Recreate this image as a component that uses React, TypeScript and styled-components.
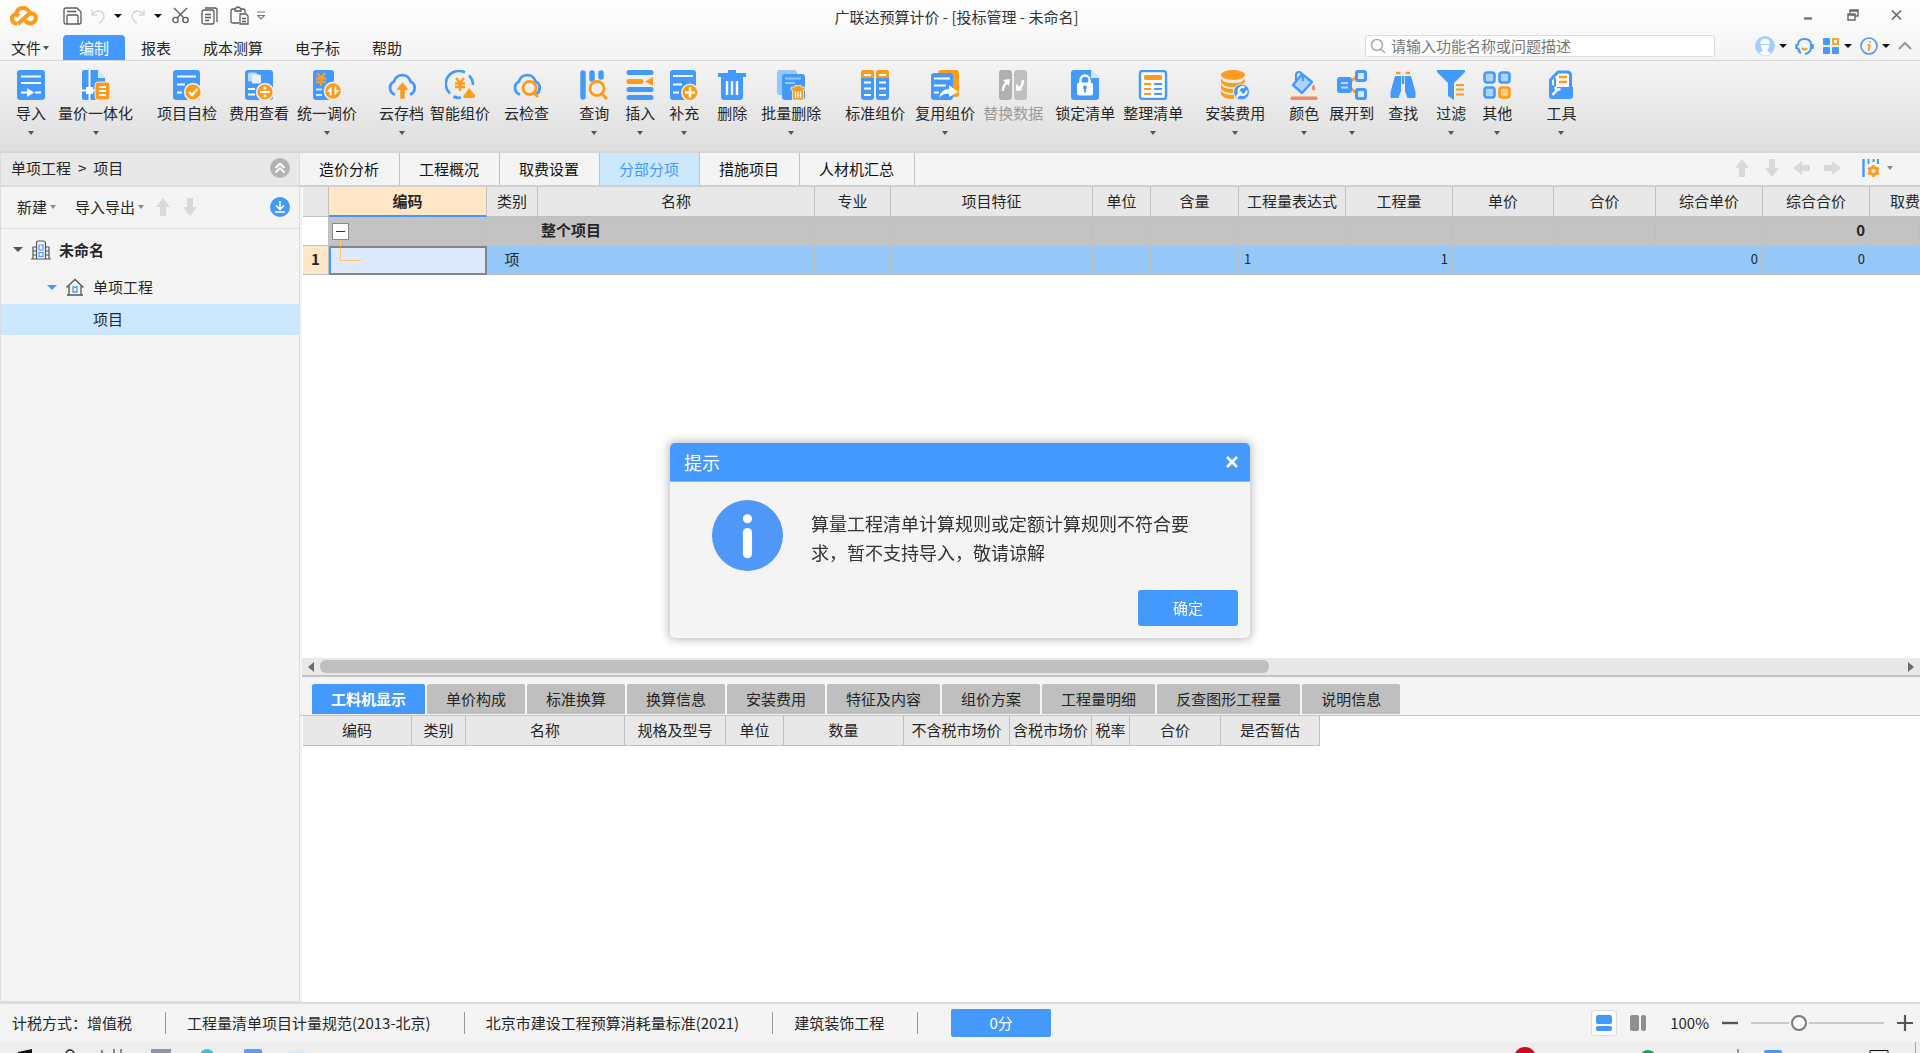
import React from 'react';
import styled, { createGlobalStyle, css } from 'styled-components';

const BLUE = '#4499ff';
const ORANGE = '#ff9b1a';
const LINE = '#d6d6d6';
const PANEL = '#f4f4f4';

const Global = createGlobalStyle`
  *, *::before, *::after { box-sizing: border-box; }
  body { margin: 0; overflow: hidden; }
  body, button, input, table {
    font-family: "Noto Sans CJK SC", "Noto Sans", sans-serif;
    font-size: 15px;
    line-height: 20px;
    color: #262626;
  }
  button { padding: 0; border: 0; background: none; white-space: nowrap; }
  svg { display: block; flex: none; }
`;

const Shell = styled.div`
  height: 100vh;
  display: flex;
  flex-direction: column;
  background: ${PANEL};
  overflow: hidden;
`;

const Top = styled.header`
  flex: none;
  background: linear-gradient(#ffffff, #f3f3f3);
  border-bottom: 1px solid ${LINE};
`;

const TitleBar = styled.div`
  display: grid;
  grid-template-columns: 1fr auto 1fr;
  align-items: center;
  height: 33px;
  padding: 0 16px 0 9px;
`;

const QuickTools = styled.div`
  display: flex;
  align-items: center;
  gap: 8px;
  padding-bottom: 2px;
`;

const ClipboardTools = styled.div`
  display: flex;
  align-items: center;
  gap: 12px;
  margin-left: 2px;
`;

const Brand = styled.div`
  margin-right: 16px;
`;

const AppTitle = styled.div`
  color: #333;
`;

const WindowButtons = styled.div`
  display: flex;
  justify-content: flex-end;
  gap: 30px;
  padding-bottom: 4px;
`;

const IconButton = styled.button`
  display: flex;
  align-items: center;
  justify-content: center;
  gap: 4px;
`;

const Caret = styled.span<{ $color?: string; $size?: number }>`
  flex: none;
  width: 0;
  height: 0;
  border-style: solid;
  border-width: ${(p) => (p.$size ?? 3) + ((p.$size ?? 3) < 4 ? 1 : 0)}px ${(p) => p.$size ?? 3}px 0;
  border-color: ${(p) => p.$color ?? '#555'} transparent transparent;
`;

const MenuBar = styled.nav`
  display: flex;
  align-items: flex-end;
  height: 27px;
`;

const MenuItem = styled.button<{ $active?: boolean; $first?: boolean }>`
  display: flex;
  align-items: center;
  gap: 2px;
  height: 25px;
  padding: ${(p) => (p.$first ? '0 14px 0 11px' : '0 16px')};
  border-radius: 4px 4px 0 0;
  ${(p) =>
    p.$active &&
    css`
      background: ${BLUE};
      color: #fff;
    `}
`;

const SearchBox = styled.label`
  display: flex;
  align-items: center;
  gap: 5px;
  width: 350px;
  height: 22px;
  margin: 0 40px 3px auto;
  padding-left: 4px;
  background: #fff;
  border: 1px solid #dedede;
  border-radius: 3px;
  input {
    flex: 1;
    min-width: 0;
    height: 20px;
    padding: 0;
    border: 0;
    outline: 0;
    background: none;
  }
  input::placeholder { color: #777; opacity: 1; }
`;

const UserTools = styled.div`
  display: flex;
  align-items: center;
  gap: 8px;
  height: 28px;
  padding-right: 8px;
`;

const Ribbon = styled.div`
  flex: none;
  display: flex;
  align-items: flex-start;
  height: 92px;
  padding: 9px 0 0 4px;
  background: linear-gradient(#f4f4f4, #dedede);
  border-bottom: 2px solid ${LINE};
`;

const Tool = styled.button<{ $space: number; $disabled?: boolean }>`
  display: flex;
  flex-direction: column;
  align-items: center;
  margin-left: ${(p) => p.$space}px;
  color: ${(p) => (p.$disabled ? '#9a9a9a' : '#262626')};
  span:nth-of-type(1) { margin: 3px 0 8px; }
`;

const Workspace = styled.div`
  flex: 1;
  min-height: 0;
  display: flex;
  border-bottom: 2px solid #dcdcdc;
`;

const Sidebar = styled.aside`
  flex: none;
  width: 300px;
  background: ${PANEL};
  border: solid #dcdcdc;
  border-width: 0 1px 1px;
`;

const SideHeader = styled.div`
  display: flex;
  align-items: center;
  justify-content: space-between;
  height: 34px;
  padding: 0 9px 2px 10px;
  background: #e8e8e8;
  border-bottom: 2px solid #dcdcdc;
`;

const Crumbs = styled.div`
  display: flex;
  gap: 7px;
`;

const SideTools = styled.div`
  display: flex;
  align-items: center;
  height: 42px;
  padding: 0 9px 2px 16px;
  border-bottom: 1px solid #dcdcdc;
  > button { margin-right: 11px; gap: 3px; }
  > button:first-child { margin-right: 19px; }
  > button:last-child { margin: 0 0 0 auto; }
`;

const Tree = styled.ul`
  list-style: none;
  margin: 0;
  padding: 0;
`;

const TreeRow = styled.li<{ $level: number; $selected?: boolean; $root?: boolean }>`
  display: flex;
  align-items: center;
  gap: ${(p) => (p.$root ? 8 : 9)}px;
  height: ${(p) => (p.$root ? 43 : p.$selected ? 31 : 32)}px;
  padding: 0 0 2px ${(p) => [12, 46, 92][p.$level]}px;
  font-weight: ${(p) => (p.$root ? 700 : 400)};
  background: ${(p) => (p.$selected ? '#cce8ff' : 'transparent')};
`;

const Main = styled.main`
  flex: 1;
  min-width: 0;
  display: flex;
  flex-direction: column;
`;

const Upper = styled.section`
  flex: 524 1 0;
  min-height: 0;
  display: flex;
  flex-direction: column;
`;

const Lower = styled.section`
  flex: 325 1 0;
  min-height: 0;
  display: flex;
  flex-direction: column;
`;

const PageTabs = styled.div`
  flex: none;
  display: flex;
  height: 34px;
  border-bottom: 2px solid #d0d0d0;
`;

const PageTab = styled.button<{ $active?: boolean }>`
  padding: 0 20px 0 19px;
  border-right: 1px solid #c2c2c2;
  color: ${(p) => (p.$active ? BLUE : '#111')};
  background: ${(p) => (p.$active ? '#cce8ff' : 'transparent')};
`;

const TabTools = styled.div`
  display: flex;
  align-items: center;
  gap: 14px;
  margin-left: auto;
  padding: 0 27px 2px 0;
  > button:last-child { margin-left: 8px; gap: 7px; }
`;

const Canvas = styled.div`
  flex: 1;
  min-height: 0;
  margin-left: 2px;
  padding-left: 1px;
  background: #fff;
  overflow: hidden;
`;

const Grid = styled.table<{ $width?: number }>`
  width: ${(p) => (p.$width ? `${p.$width}px` : '100%')};
  table-layout: fixed;
  border-collapse: separate;
  border-spacing: 0;
  th, td {
    height: 29px;
    padding: 0 5px 2px;
    border: solid #bfbfbf;
    border-width: 0 1px 1px 0;
    text-align: left;
    white-space: nowrap;
    font-weight: 400;
  }
  thead th {
    height: 30px;
    padding: 0 0 2px;
    text-align: center;
    background: #e8e8e8;
  }
`;

const ActiveHead = styled.th`
  && {
    font-weight: 700;
    padding-bottom: 1px;
    background: #ffe6c7;
    border-bottom: 2px solid ${BLUE};
  }
`;

const EdgeHead = styled.th`
  && {
    text-align: right;
    border-right: 0;
  }
`;

const TotalRow = styled.tr`
  && > * { background: #c3c3c3; font-weight: 700; }
  && > th:first-child { background: #fff; }
  && > td:nth-child(4) { padding-left: 3px; }
`;

const ItemRow = styled.tr`
  && > td { background: #93c8f8; font-size: 13px; }
  && > th { background: #ffe6c7; font-weight: 700; text-align: center; padding: 0 0 2px; }
  && > td:nth-child(3) { font-size: 15px; text-align: center; }
`;

const NumberCell = styled.td`
  && { text-align: right; padding-right: 4px; }
`;

const TreeCell = styled.td`
  && { padding: 0 0 0 3px; }
`;

const CurrentCell = styled.td`
  &&&& {
    padding: 0 0 0 9px;
    background: #dde9fd;
    border: 2px solid #858585;
    border-left-color: ${BLUE};
  }
  svg { margin-top: -12px; }
`;

const Toggle = styled.button`
  position: relative;
  display: block;
  width: 17px;
  height: 17px;
  background: #fff;
  border: 1px solid #8a8a8a;
  &::before {
    content: '';
    display: block;
    width: 9px;
    height: 1px;
    margin: 0 auto;
    background: #333;
  }
  &::after {
    content: '';
    position: absolute;
    left: 7px;
    top: 16px;
    width: 1px;
    height: 7px;
    background: #ffc56f;
  }
`;

const ScrollRow = styled.div`
  flex: none;
  display: flex;
  align-items: center;
  gap: 6px;
  height: 19px;
  margin-left: 2px;
  padding: 0 6px;
  background: #e8e8e8;
  border-bottom: 2px solid #c3c3c3;
`;

const ScrollTrack = styled.div`
  flex: 1;
`;

const ScrollThumb = styled.div`
  width: 60%;
  height: 13px;
  border-radius: 6px;
  background: #bfbfbf;
`;

const DetailTabs = styled.div`
  flex: none;
  display: flex;
  align-items: stretch;
  gap: 2px;
  height: 39px;
  padding: 7px 0 1px 12px;
  border-bottom: 1px solid #c3c3c3;
`;

const DetailTab = styled.button<{ $active?: boolean }>`
  padding: 0 19px;
  border-radius: 2px 2px 0 0;
  color: ${(p) => (p.$active ? '#fff' : '#262626')};
  font-weight: ${(p) => (p.$active ? 700 : 400)};
  background: ${(p) => (p.$active ? BLUE : '#bfbfbf')};
`;

const Status = styled.footer`
  flex: none;
  display: flex;
  align-items: center;
  height: 38px;
  padding: 0 7px 0 12px;
  background: ${PANEL};
`;

const StatusItem = styled.span`
  display: flex;
  align-items: center;
  white-space: nowrap;
  &::after {
    content: '';
    width: 1px;
    height: 22px;
    margin: 0 21px 0 33px;
    background: #8f9aa3;
  }
`;

const Score = styled.button`
  width: 100px;
  height: 28px;
  margin-left: 12px;
  border-radius: 2px;
  background: ${BLUE};
  color: #fff;
`;

const ZoomTools = styled.div`
  display: flex;
  align-items: center;
  gap: 13px;
  margin-left: auto;
`;

const ViewSwitch = styled.div`
  display: flex;
  gap: 8px;
`;

const ViewButton = styled(IconButton)<{ $active?: boolean }>`
  width: 26px;
  height: 26px;
  border-radius: 3px;
  border: 1px solid ${(p) => (p.$active ? '#dcdcdc' : 'transparent')};
  background: ${(p) => (p.$active ? '#fff' : 'transparent')};
`;

const ZoomValue = styled.label`
  margin-left: 6px;
`;

const Slider = styled.input`
  appearance: none;
  width: 133px;
  height: 16px;
  margin: 0;
  background: linear-gradient(#c9c9c9, #c9c9c9) center / 100% 2px no-repeat;
  &::-webkit-slider-thumb {
    appearance: none;
    width: 16px;
    height: 16px;
    border-radius: 50%;
    border: 2px solid #777;
    background: #fff;
    box-shadow: 0 0 0 2px ${PANEL};
  }
`;

const Taskbar = styled.div`
  flex: none;
  display: flex;
  align-items: flex-end;
  justify-content: space-between;
  height: 11px;
  background: #eeeeee;
  overflow: hidden;
`;

const Overlay = styled.div`
  position: fixed;
  inset: 0;
  display: flex;
  align-items: center;
  justify-content: center;
  padding-top: 28px;
`;

const Dialog = styled.section`
  width: 580px;
  border-radius: 5px;
  background: ${PANEL};
  box-shadow: 0 0 8px 2px rgba(0, 0, 0, 0.25);
  overflow: hidden;
`;

const DialogHead = styled.header`
  display: flex;
  align-items: center;
  justify-content: space-between;
  height: 39px;
  padding: 0 12px 0 14px;
  background: ${BLUE};
  border-bottom: 1px solid #84bbfb;
  color: #fff;
  font-size: 18px;
`;

const DialogBody = styled.div`
  display: flex;
  gap: 28px;
  padding: 18px 42px 0;
  p {
    width: 380px;
    margin: 9px 0 0;
    font-size: 18px;
    line-height: 29px;
    color: #333;
  }
`;

const DialogFoot = styled.footer`
  display: flex;
  justify-content: flex-end;
  padding: 19px 12px 12px;
`;

const Confirm = styled.button`
  width: 100px;
  height: 36px;
  border-radius: 3px;
  background: ${BLUE};
  color: #fff;
`;

/* ---------- ribbon icons, all on a 30 x 30 board ---------- */

const Board = ({ children }: { children: React.ReactNode }) => (
  <svg width="30" height="30" viewBox="0 0 30 30" fill="none" aria-hidden="true">
    {children}
  </svg>
);

const Yen = ({ x, y }: { x: number; y: number }) => (
  <path
    transform={`translate(${x} ${y})`}
    d="M1 0L5 5L9 0M0 5.5H10M0 9H10M5 5V13"
    stroke={ORANGE}
    strokeWidth="2.4"
  />
);

const CLOUD = 'M8 24.5A7 7 0 0 1 7 11.5A8.5 8.5 0 0 1 23.5 11.5A7 7 0 0 1 23 24.5';

const icons: Record<string, React.ReactNode> = {
  import: (
    <Board>
      <rect x="1" width="28" height="30" rx="3" fill={BLUE} />
      <path d="M5 6.5H25M5 13H25M5 22.5H12M19 22.5H25" stroke="#fff" strokeWidth="2.2" />
      <path d="M11 18L18 22.5L11 27Z" fill="#fff" />
    </Board>
  ),
  unify: (
    <Board>
      <path d="M3 0H17L24 8V30H3Q1 30 1 28V2Q1 0 3 0Z" fill={BLUE} />
      <path d="M17 0L24 8H17Z" fill="#d5e9ff" />
      <path d="M8.5 0V30M0 20.5H16" stroke="#fff" strokeWidth="2" />
      <rect x="5" y="17" width="7" height="7" fill="#fff" />
      <rect x="14" y="12" width="15" height="18" rx="3" fill={ORANGE} stroke="#f0f0f0" />
      <path d="M18 17H25M18 21H25M18 25H25" stroke="#fff" strokeWidth="1.8" />
    </Board>
  ),
  selfcheck: (
    <Board>
      <rect x="1" width="27" height="30" rx="3" fill={BLUE} />
      <path d="M5 6.5H24M5 14.5H13M5 22.5H10" stroke="#fff" strokeWidth="2" />
      <circle cx="21" cy="22" r="8.4" fill={ORANGE} stroke="#efefef" strokeWidth="1.6" />
      <path d="M17 22L20 25L25.500 19" stroke="#fff" strokeWidth="2.4" />
    </Board>
  ),
  feeview: (
    <Board>
      <rect x="1" width="28" height="30" rx="3" fill={BLUE} />
      <rect x="4" y="2.500" width="9" height="9" rx="1.500" fill="#bfdcff" />
      <rect x="8" y="4.500" width="9" height="9" rx="1.500" fill="#e4f1ff" />
      <path d="M4 19H11M4 24.500H11" stroke="#fff" strokeWidth="2" />
      <circle cx="21" cy="22" r="8.4" fill={ORANGE} stroke="#efefef" strokeWidth="1.6" />
      <path d="M16 22H26" stroke="#fff" strokeWidth="2.2" />
      <circle cx="21" cy="18" r="1.5" fill="#fff" />
      <circle cx="21" cy="26" r="1.5" fill="#fff" />
    </Board>
  ),
  adjust: (
    <Board>
      <rect x="1" width="21" height="30" rx="3" fill={BLUE} />
      <Yen x={4} y={3} />
      <path d="M4 19.500H10M4 25H10" stroke="#cfe5ff" strokeWidth="2" />
      <circle cx="21" cy="21" r="8.6" fill={ORANGE} stroke="#efefef" strokeWidth="1.6" />
      <path d="M19.500 16.500V25.500H17.800V22H14.500ZM22.500 25.500V16.500H24.200V20H27.500Z" fill="#fff" />
    </Board>
  ),
  cloudsave: (
    <Board>
      <path d={CLOUD} stroke={BLUE} strokeWidth="2.800" />
      <path d="M15.500 12L22 20H18V29H13V20H9Z" fill={ORANGE} stroke="#eee" strokeWidth="0.500" />
    </Board>
  ),
  smart: (
    <Board>
      <path d="M20 2.500A13 13 0 0 0 5 23.500M24 5.500Q28 9.500 28 15M8.500 26.500Q12 28.500 16 27.500" stroke={BLUE} strokeWidth="2.600" />
      <Yen x={10} y={8} />
      <path d="M24 18Q27 22 30 25Q31 28 28 28H20Q17 28 19 25Q22 22 24 18Z" fill={ORANGE} />
    </Board>
  ),
  cloudcheck: (
    <Board>
      <path d={CLOUD} stroke={BLUE} strokeWidth="2.800" />
      <circle cx="17.500" cy="18" r="6.500" stroke={ORANGE} strokeWidth="2.800" fill="#eee" />
      <path d="M22 23L26 27" stroke={ORANGE} strokeWidth="3" />
    </Board>
  ),
  query: (
    <Board>
      <path d="M4 3V27M13 3V9M22 3V7" stroke={BLUE} strokeWidth="5.500" strokeLinecap="round" />
      <circle cx="18" cy="18.500" r="7" stroke={ORANGE} strokeWidth="2.800" fill="#eee" />
      <path d="M23 24L28 29" stroke={ORANGE} strokeWidth="3" />
    </Board>
  ),
  insert: (
    <Board>
      <path d="M4 2.500H26M4 19.500H26M4 27.500H26" stroke={BLUE} strokeWidth="5" strokeLinecap="round" />
      <path d="M4 11.500H16" stroke={ORANGE} strokeWidth="5" strokeLinecap="round" />
      <path d="M28 7V16L20 11.500Z" fill={ORANGE} />
    </Board>
  ),
  supply: (
    <Board>
      <rect x="1" width="26" height="30" rx="3" fill={BLUE} />
      <path d="M4 6H24M4 14.500H13M4 22.500H10" stroke="#fff" strokeWidth="2" />
      <circle cx="21" cy="22.500" r="8.200" fill={ORANGE} stroke="#efefef" strokeWidth="1.600" />
      <path d="M16 22.500H26M21 17.500V27.500" stroke="#fff" strokeWidth="2.400" />
    </Board>
  ),
  remove: (
    <Board>
      <path d="M1 3H11V0H19V3H29V7H26V27Q26 30 23 30H7Q4 30 4 27V7H1Z" fill={BLUE} />
      <path d="M10 11V25M15 11V25M20 11V25" stroke="#fff" strokeWidth="2.400" />
    </Board>
  ),
  batch: (
    <Board>
      <rect x="1" width="20" height="25" rx="3" fill="#94c6ff" />
      <rect x="6" y="4" width="23" height="26" rx="3" fill={BLUE} />
      <path d="M9 8.500H25M9 13H19" stroke="#94c6ff" strokeWidth="1.800" />
      <path d="M15 17H19V15.500H25V17H29V20H27.500V30H16.500V20H15Z" fill={ORANGE} stroke="#eee" strokeWidth="0.800" />
      <path d="M19.500 21V28M22 21V28M24.500 21V28" stroke="#fff" strokeWidth="1.300" />
    </Board>
  ),
  standard: (
    <Board>
      <rect x="1" width="13" height="30" rx="3" fill={BLUE} />
      <rect x="16" width="13" height="30" rx="3" fill={BLUE} />
      <path d="M1 8V3Q1 0 4 0H11Q14 0 14 3V8ZM16 8V3Q16 0 19 0H26Q29 0 29 3V8Z" fill={ORANGE} />
      <path d="M4 5H11M19 5H26M4 12.500H11M19 12.500H26M4 18.500H11M19 18.500H26M4 25H11M19 25H26" stroke="#fff" strokeWidth="2.200" />
    </Board>
  ),
  reuse: (
    <Board>
      <rect x="8" width="21" height="27" rx="3" fill={ORANGE} />
      <rect x="1" y="3" width="22" height="27" rx="3" fill={BLUE} />
      <path d="M4 8.500H20M4 15.500H16M4 22.500H9" stroke="#fff" strokeWidth="2" />
      <path d="M9 28Q11 19 19 19V15L28 22L19 27V24Q13 23 9 28Z" fill="#fff" />
    </Board>
  ),
  swap: (
    <Board>
      <rect x="1" width="13" height="30" rx="3" fill="#b0b0b0" />
      <rect x="16" width="13" height="30" rx="3" fill="#c0c0c0" />
      <path d="M5 21Q5 15 10 11M25 10Q25 16 20 20" stroke="#fff" strokeWidth="2.400" />
      <path d="M5 10L12 9L11 16ZM18 14V21L25 20Z" fill="#fff" />
    </Board>
  ),
  lock: (
    <Board>
      <path d="M4 0H21L29 8V27Q29 30 26 30H4Q1 30 1 27V3Q1 0 4 0Z" fill={BLUE} />
      <path d="M21 0L29 8H21Z" fill="#d5e9ff" />
      <rect x="7" y="12.500" width="16" height="13" rx="2.500" fill="#fff" />
      <path d="M10.500 13V10A4.500 4.500 0 0 1 19.500 10V13" stroke="#fff" strokeWidth="2.400" />
      <circle cx="15" cy="17.500" r="2" fill={BLUE} />
      <path d="M15 18V22.500" stroke={BLUE} strokeWidth="1.800" />
    </Board>
  ),
  arrange: (
    <Board>
      <rect x="2" y="1" width="26" height="28" rx="2.500" stroke={BLUE} strokeWidth="2.400" fill="#fff" />
      <rect x="6" y="5" width="18" height="5" rx="1.500" fill={ORANGE} />
      <path d="M6 14H13M6 19H13M6 24H13" stroke={ORANGE} strokeWidth="2.200" />
      <path d="M16 14H24M16 19H24M16 24H24" stroke={BLUE} strokeWidth="2.200" />
    </Board>
  ),
  install: (
    <Board>
      <ellipse cx="13" cy="5" rx="12" ry="5" fill={ORANGE} />
      <path d="M1 8Q2 13 13 13Q24 13 25 8V12Q23 17 13 17Q2 17 1 12ZM1 14Q2 19 13 19V23Q2 23 1 18ZM1 20Q2 25 14 25V29Q2 29 1 24Z" fill={ORANGE} />
      <circle cx="21.500" cy="22" r="8" fill={BLUE} stroke="#e8e8e8" />
      <path d="M16.500 27L21.500 22" stroke="#fff" strokeWidth="2.600" />
      <path d="M24.500 17.500A4 4 0 1 0 26.500 20.500" stroke="#fff" strokeWidth="2.200" />
    </Board>
  ),
  color: (
    <Board>
      <path d="M13 4L23 12L13 23L4 15Z" fill="#acd4ff" stroke={BLUE} strokeWidth="2.400" strokeLinejoin="round" />
      <path d="M7 12V5Q7 2 10.500 2Q14 3 14 11" stroke={BLUE} strokeWidth="2.200" />
      <path d="M24.500 14Q28 20 24.500 20.500Q21 20 24.500 14Z" fill="#fb8463" />
      <path d="M3 28.200H27" stroke="#fb8463" strokeWidth="3.400" strokeLinecap="round" />
    </Board>
  ),
  expand: (
    <Board>
      <path d="M12 13L20 6M12 16L20 24" stroke={ORANGE} strokeWidth="2.400" />
      <rect y="7" width="15" height="16" rx="3" fill={BLUE} />
      <path d="M4 13H11M4 17.500H11" stroke="#b9d9ff" strokeWidth="1.800" />
      <rect x="19.500" y="1.500" width="9" height="9" rx="1.500" fill="#d5e9ff" stroke={BLUE} strokeWidth="3" />
      <rect x="19.500" y="19.500" width="9" height="9" rx="1.500" fill="#d5e9ff" stroke={BLUE} strokeWidth="3" />
    </Board>
  ),
  find: (
    <Board>
      <path d="M7 6H13V21L10.500 28H2.500V22ZM23 6H17V21L19.500 28H27.500V22Z" fill={BLUE} />
      <path d="M15 6V14" stroke={BLUE} strokeWidth="2.500" />
      <path d="M8 3H12.500M17.500 3H22" stroke={ORANGE} strokeWidth="2.600" />
    </Board>
  ),
  filter: (
    <Board>
      <path d="M1 0H29V2L18 13V30L12 26V13L1 2Z" fill={BLUE} />
      <path d="M20 15H28M20 19.500H28M20 24.500H28" stroke={ORANGE} strokeWidth="2.200" />
    </Board>
  ),
  others: (
    <Board>
      {[[2.5, 2.5], [17.5, 2.5], [2.5, 17.5]].map(([x, y]) => (
        <rect key={`${x}-${y}`} x={x} y={y} width="10" height="10" rx="2.500" fill="#acd4ff" stroke={BLUE} strokeWidth="2.600" />
      ))}
      <rect x="17.500" y="17.500" width="10" height="10" rx="2.500" fill="#ffcb8a" stroke={ORANGE} strokeWidth="2.600" />
    </Board>
  ),
  toolbox: (
    <Board>
      <path d="M4.500 17V10L12 2H21Q24.500 2 24.500 5V17" stroke={BLUE} strokeWidth="3" strokeLinejoin="round" fill="#fff" />
      <path d="M9 8V17" stroke={BLUE} strokeWidth="2" />
      <path d="M13 7H21M13 12H21" stroke={ORANGE} strokeWidth="2.400" />
      <path d="M3 12L9 17H27V26Q27 29 24 29H6Q3 29 3 26Z" fill={BLUE} />
      <path d="M6.500 25L11 20M9 17L11 20L14.500 19" stroke="#fff" strokeWidth="2.600" />
    </Board>
  ),
};

const tools: [string, string, number, boolean?][] = [
  ['import', '导入', 12, true],
  ['unify', '量价一体化', 12, true],
  ['selfcheck', '项目自检', 24],
  ['feeview', '费用查看', 12],
  ['adjust', '统一调价', 8, true],
  ['cloudsave', '云存档', 22, true],
  ['smart', '智能组价', 6],
  ['cloudcheck', '云检查', 14],
  ['query', '查询', 30, true],
  ['insert', '插入', 16, true],
  ['supply', '补充', 14, true],
  ['remove', '删除', 18],
  ['batch', '批量删除', 14, true],
  ['standard', '标准组价', 24],
  ['reuse', '复用组价', 10, true],
  ['swap', '替换数据', 8],
  ['lock', '锁定清单', 12],
  ['arrange', '整理清单', 8, true],
  ['install', '安装费用', 22, true],
  ['color', '颜色', 24, true],
  ['expand', '展开到', 10, true],
  ['find', '查找', 14],
  ['filter', '过滤', 18, true],
  ['others', '其他', 16, true],
  ['toolbox', '工具', 34, true],
];

const Arrow = ({ turn }: { turn: number }) => (
  <svg width="16" height="20" viewBox="0 0 16 20" aria-hidden="true">
    <path transform={`rotate(${turn} 8 10)`} d="M8 1L15 10H11V19H5V10H1Z" fill="#d9d9d9" />
  </svg>
);

const columns: [string, number | null][] = [
  ['', 26], ['编码', 158], ['类别', 51], ['名称', 277], ['专业', 76], ['项目特征', 202],
  ['单位', 58], ['含量', 88], ['工程量表达式', 107], ['工程量', 107], ['单价', 101],
  ['合价', 102], ['综合单价', 107], ['综合合价', 107], ['取费', null],
];

const detailColumns: [string, number][] = [
  ['编码', 109], ['类别', 54], ['名称', 159], ['规格及型号', 101], ['单位', 58], ['数量', 120],
  ['不含税市场价', 106], ['含税市场价', 82], ['税率', 38], ['合价', 91], ['是否暂估', 99],
];

const detailWidth = detailColumns.reduce((total, [, w]) => total + w, 0);

const Cols = ({ list }: { list: [string, number | null][] }) => (
  <colgroup>
    {list.map(([name, w]) => (
      <col key={name} width={w ?? undefined} />
    ))}
  </colgroup>
);

const Blank = ({ count }: { count: number }) => (
  <>
    {Array.from({ length: count }, (_, i) => (
      <td key={i} />
    ))}
  </>
);

function TitleRow() {
  return (
    <TitleBar>
      <QuickTools>
        <Brand>
          <svg width="30" height="22" viewBox="0 0 30 22" fill="none" stroke={ORANGE} strokeWidth="4" aria-hidden="true">
            <path d="M8 18.500A4.800 4.800 0 0 1 5 9.800Q7.500 8.800 10 11M7 9.500Q8 3 14 3Q18.500 3 20.500 7.500M9 19L19 9.800Q24 6.500 26.500 10.800Q28 16 23 18.200Q18.500 19 16.500 15.500" strokeLinejoin="round" />
          </svg>
        </Brand>
        <IconButton aria-label="保存">
          <svg width="19" height="18" viewBox="0 0 19 18" fill="none" stroke="#5c5c5c" strokeWidth="1.300">
            <path d="M1 3Q1 1 3 1H14L18 5V15Q18 17 16 17H3Q1 17 1 15ZM4 17V9Q4 8 5 8H14Q15 8 15 9V17M4 4.500H13" />
          </svg>
        </IconButton>
        <IconButton aria-label="撤销">
          <svg width="16" height="16" viewBox="0 0 16 16" fill="none" stroke="#d8d8d8" strokeWidth="1.500">
            <path d="M2 2V7H7M2 7Q5 3 9 3Q14 4 14 9Q13 13 9 15" />
          </svg>
        </IconButton>
        <Caret $color="#111" $size={4} />
        <IconButton aria-label="恢复">
          <svg width="16" height="16" viewBox="0 0 16 16" fill="none" stroke="#d8d8d8" strokeWidth="1.500">
            <path d="M14 2V7H9M14 7Q11 3 7 3Q2 4 2 9Q3 13 7 15" />
          </svg>
        </IconButton>
        <Caret $color="#111" $size={4} />
        <ClipboardTools>
          <IconButton aria-label="剪切">
            <svg width="17" height="17" viewBox="0 0 17 17" fill="none" stroke="#5c5c5c" strokeWidth="1.400">
              <circle cx="3.500" cy="13" r="2.600" />
              <circle cx="13.500" cy="13" r="2.600" />
              <path d="M2 1L12 11M15 1L5 11" />
            </svg>
          </IconButton>
          <IconButton aria-label="复制">
            <svg width="17" height="18" viewBox="0 0 17 18" fill="none" stroke="#5c5c5c" strokeWidth="1.300">
              <rect x="1" y="3" width="12" height="14" rx="2" />
              <path d="M4 1H14Q16 1 16 3V15M4 7.500H10M4 10.500H10M4 13.500H8" />
            </svg>
          </IconButton>
          <IconButton aria-label="粘贴">
            <svg width="19" height="19" viewBox="0 0 19 19" fill="none" stroke="#5c5c5c" strokeWidth="1.300">
              <path d="M9 17H3Q1 17 1 15V5Q1 3 3 3H5M11 3H13Q15 3 15 5V7M5 5V3Q8 -1 11 3V5Z" />
              <path d="M10 8H16L18 10V18H10ZM12 12.500H16M12 15.500H16" />
            </svg>
          </IconButton>
        </ClipboardTools>
        <IconButton aria-label="更多">
          <svg width="8" height="9" viewBox="0 0 8 9" fill="none" stroke="#777" strokeWidth="1.200">
            <path d="M0 1H8M0.500 4.500H7.500L4 8Z" />
          </svg>
        </IconButton>
      </QuickTools>
      <AppTitle>广联达预算计价 - [投标管理 - 未命名]</AppTitle>
      <WindowButtons>
        <IconButton aria-label="最小化">
          <svg width="16" height="16" viewBox="0 0 16 16"><path d="M4 11.500H12" stroke="#777" strokeWidth="2.400" /></svg>
        </IconButton>
        <IconButton aria-label="还原">
          <svg width="14" height="14" viewBox="0 0 14 14" fill="none" stroke="#666" strokeWidth="1.400">
            <path d="M4 5V2H12V8H9M4 3H12M2 6H9V12H2ZM2 7H9" />
          </svg>
        </IconButton>
        <IconButton aria-label="关闭">
          <svg width="14" height="14" viewBox="0 0 14 14"><path d="M2 2.500L11 11.500M11 2.500L2 11.500" stroke="#666" strokeWidth="1.600" /></svg>
        </IconButton>
      </WindowButtons>
    </TitleBar>
  );
}

function MenuRow() {
  return (
    <MenuBar>
      <MenuItem $first>文件<Caret /></MenuItem>
      {['编制', '报表', '成本测算', '电子标', '帮助'].map((name) => (
        <MenuItem key={name} $active={name === '编制'}>{name}</MenuItem>
      ))}
      <SearchBox>
        <svg width="16" height="16" viewBox="0 0 16 16" fill="none" stroke="#aaa" strokeWidth="1.500" aria-hidden="true">
          <circle cx="7" cy="7" r="5.500" />
          <path d="M11 11L15 15" />
        </svg>
        <input aria-label="搜索" placeholder="请输入功能名称或问题描述" />
      </SearchBox>
      <UserTools>
        <IconButton aria-label="账户">
          <svg width="20" height="20" viewBox="0 0 20 20">
            <circle cx="10" cy="10" r="10" fill="#a5cffb" />
            <path d="M5 8Q5 3 10 3Q15 3 15 8ZM6 9H14Q14 13 12 14Q13 16 16 17Q13 19.500 10 19.500Q7 19.500 4 17Q7 16 8 14Q6 13 6 9Z" fill="#fff" />
          </svg>
          <Caret $color="#111" $size={4} />
        </IconButton>
        <IconButton aria-label="客服">
          <svg width="19" height="19" viewBox="0 0 19 19" fill="none" stroke={BLUE} strokeWidth="2">
            <path d="M3 8Q3 2 9.500 2Q16 2 16 8V10Q16 16 10 17" />
            <path d="M1.500 7V12M17.500 7V12M3 11Q4 15 6 16" strokeWidth="2.400" />
            <path d="M7 11Q9.500 14 12 11" stroke={ORANGE} />
          </svg>
        </IconButton>
        <IconButton aria-label="应用">
          <svg width="18" height="18" viewBox="0 0 18 18" fill={BLUE}>
            <rect x="1" y="1" width="7" height="7" rx="1" />
            <rect x="1" y="10" width="7" height="7" rx="1" />
            <rect x="10" y="10" width="7" height="7" rx="1" />
            <rect x="11" y="2" width="5" height="5" fill="#fff" stroke={ORANGE} strokeWidth="1.800" />
          </svg>
          <Caret $color="#111" $size={4} />
        </IconButton>
        <IconButton aria-label="关于">
          <svg width="18" height="18" viewBox="0 0 18 18" fill="none">
            <circle cx="9" cy="9" r="8" stroke={BLUE} strokeWidth="1.600" />
            <path d="M9.800 7.500L8.500 14M7.500 7.800H10M10.200 4V5.800" stroke={ORANGE} strokeWidth="1.800" />
          </svg>
          <Caret $color="#111" $size={4} />
        </IconButton>
        <IconButton aria-label="收起功能区">
          <svg width="14" height="10" viewBox="0 0 14 10"><path d="M1 8L7 2L13 8" fill="none" stroke="#999" strokeWidth="2.200" /></svg>
        </IconButton>
      </UserTools>
    </MenuBar>
  );
}

function ProjectPanel() {
  return (
    <Sidebar>
      <SideHeader>
        <Crumbs>
          <span>单项工程</span>
          <span>&gt;</span>
          <span>项目</span>
        </Crumbs>
        <IconButton aria-label="折叠">
          <svg width="20" height="20" viewBox="0 0 20 20" fill="none">
            <circle cx="10" cy="10" r="10" fill="#b3b3b3" />
            <path d="M5.500 10L10 5.500L14.500 10M5.500 14.500L10 10L14.500 14.500" stroke="#fff" strokeWidth="1.800" />
          </svg>
        </IconButton>
      </SideHeader>
      <SideTools>
        <IconButton>新建<Caret $color="#888" /></IconButton>
        <IconButton>导入导出<Caret $color="#888" /></IconButton>
        <IconButton aria-label="上移"><Arrow turn={0} /></IconButton>
        <IconButton aria-label="下移"><Arrow turn={180} /></IconButton>
        <IconButton aria-label="下载">
          <svg width="20" height="20" viewBox="0 0 20 20" fill="none">
            <circle cx="10" cy="10" r="10" fill={BLUE} />
            <path d="M10 4V12M6 8.500L10 12.500L14 8.500M5 15H15" stroke="#fff" strokeWidth="1.600" />
          </svg>
        </IconButton>
      </SideTools>
      <Tree>
        <TreeRow $level={0} $root>
          <Caret $size={5} />
          <svg width="20" height="20" viewBox="0 0 20 20" fill="none" stroke="#555" strokeWidth="1.200" aria-hidden="true">
            <path d="M0 19H20M5.500 19V3Q5.500 1 7.500 1H12Q14.500 1 14.500 3V19M5.500 7H2V19M14.500 7H18V19M2 11H5M2 15H5M15 11H18M15 15H18" />
            <path d="M8 5H12V10H8ZM8 12.500H12V16.500H8Z" stroke={BLUE} />
          </svg>
          未命名
        </TreeRow>
        <TreeRow $level={1}>
          <Caret $size={5} $color={BLUE} />
          <svg width="18" height="18" viewBox="0 0 18 18" fill="none" stroke="#555" strokeWidth="1.300" aria-hidden="true">
            <path d="M0.500 9.500L9 1.500L17.500 9.500M3 8V17M15 8V17M1 17H17" />
            <path d="M7 9H11V14H7Z" stroke={BLUE} />
          </svg>
          单项工程
        </TreeRow>
        <TreeRow $level={2} $selected>项目</TreeRow>
      </Tree>
    </Sidebar>
  );
}

function HeadCell({ name }: { name: string }) {
  if (name === '编码') return <ActiveHead>{name}</ActiveHead>;
  if (name === '取费') return <EdgeHead>{name}</EdgeHead>;
  return <th>{name}</th>;
}

function BillGrid() {
  return (
    <Canvas>
      <Grid>
        <Cols list={columns} />
        <thead>
          <tr>
            {columns.map(([name]) => (
              <HeadCell key={name} name={name} />
            ))}
          </tr>
        </thead>
        <tbody>
          <TotalRow>
            <th />
            <TreeCell><Toggle aria-label="折叠整个项目" /></TreeCell>
            <td />
            <td>整个项目</td>
            <Blank count={9} />
            <NumberCell>0</NumberCell>
            <td />
          </TotalRow>
          <ItemRow>
            <th>1</th>
            <CurrentCell>
              <svg width="22" height="13" viewBox="0 0 22 13" aria-hidden="true">
                <path d="M0.500 0V12.500H21" fill="none" stroke="#ffc56f" />
              </svg>
            </CurrentCell>
            <td>项</td>
            <Blank count={5} />
            <td>1</td>
            <NumberCell>1</NumberCell>
            <Blank count={2} />
            <NumberCell>0</NumberCell>
            <NumberCell>0</NumberCell>
            <td />
          </ItemRow>
        </tbody>
      </Grid>
    </Canvas>
  );
}

function StatusBar() {
  return (
    <Status>
      <StatusItem>计税方式：增值税</StatusItem>
      <StatusItem>工程量清单项目计量规范(2013-北京)</StatusItem>
      <StatusItem>北京市建设工程预算消耗量标准(2021)</StatusItem>
      <StatusItem>建筑装饰工程</StatusItem>
      <Score>0分</Score>
      <ZoomTools>
        <ViewSwitch>
          <ViewButton $active aria-label="上下布局">
            <svg width="16" height="16" viewBox="0 0 16 16" fill={BLUE}><rect width="16" height="9" rx="2" /><rect y="11" width="16" height="5" rx="2" /></svg>
          </ViewButton>
          <ViewButton aria-label="左右布局">
            <svg width="16" height="16" viewBox="0 0 16 16" fill="#8f8f8f"><rect width="9" height="16" rx="2" /><rect x="11" width="5" height="16" rx="2" /></svg>
          </ViewButton>
        </ViewSwitch>
        <ZoomValue htmlFor="zoom">100%</ZoomValue>
        <IconButton aria-label="缩小">
          <svg width="16" height="16" viewBox="0 0 16 16"><path d="M0 8H16" stroke="#555" strokeWidth="2.400" /></svg>
        </IconButton>
        <Slider id="zoom" type="range" min="0" max="100" defaultValue="34" />
        <IconButton aria-label="放大">
          <svg width="16" height="16" viewBox="0 0 16 16"><path d="M0 8H16M8 0V16" stroke="#555" strokeWidth="2.200" /></svg>
        </IconButton>
      </ZoomTools>
    </Status>
  );
}

function SystemBar() {
  return (
    <Taskbar>
      <svg width="320" height="4" viewBox="0 0 320 4" aria-hidden="true">
        <path d="M18 3L32 0V4H18Z" fill="#111" />
        <circle cx="70" cy="5" r="4" fill="none" stroke="#222" strokeWidth="1.500" />
        <path d="M102 1V4M114 0V4M121 0V4" stroke="#222" />
        <rect x="151" width="20" height="4" fill="#8d97a1" />
        <circle cx="207" cy="7" r="7" fill="#2cc5dc" />
        <rect x="244" width="18" height="6" rx="2" fill="#549dfb" />
        <ellipse cx="298" cy="4" rx="10" ry="3" fill="#d8ecff" />
      </svg>
      <svg width="420" height="11" viewBox="0 0 420 11" aria-hidden="true">
        <circle cx="25" cy="16" r="11" fill="#c8101c" />
        <circle cx="148" cy="16" r="8" fill="#0bb04f" />
        <path d="M238 7V11" stroke="#444" />
        <rect x="264" y="8" width="18" height="6" rx="2" fill={BLUE} />
        <path d="M370 11V8.500H388V11" fill="none" stroke="#111" />
        <path d="M415.500 0V11" stroke="#a5a5a5" />
      </svg>
    </Taskbar>
  );
}

export default function App() {
  return (
    <Shell>
      <Global />
      <Top>
        <TitleRow />
        <MenuRow />
      </Top>
      <Ribbon>
        {tools.map(([icon, label, space, drop]) => (
          <Tool key={icon} $space={space} $disabled={icon === 'swap'} disabled={icon === 'swap'}>
            {icons[icon]}
            <span>{label}</span>
            {drop && <Caret />}
          </Tool>
        ))}
      </Ribbon>
      <Workspace>
        <ProjectPanel />
        <Main>
          <Upper>
            <PageTabs>
              {['造价分析', '工程概况', '取费设置', '分部分项', '措施项目', '人材机汇总'].map((name) => (
                <PageTab key={name} $active={name === '分部分项'}>{name}</PageTab>
              ))}
              <TabTools>
                <IconButton aria-label="上移"><Arrow turn={0} /></IconButton>
                <IconButton aria-label="下移"><Arrow turn={180} /></IconButton>
                <IconButton aria-label="左移"><Arrow turn={270} /></IconButton>
                <IconButton aria-label="右移"><Arrow turn={90} /></IconButton>
                <IconButton aria-label="列设置">
                  <svg width="18" height="20" viewBox="0 0 18 20" fill="none">
                    <path d="M1.500 1V19" stroke={BLUE} strokeWidth="2.400" />
                    <path d="M6.500 1V6M11.500 1V4M16 1V6" stroke={BLUE} strokeWidth="2" />
                    <circle cx="11.500" cy="13" r="3.600" stroke={ORANGE} strokeWidth="3" />
                    <path d="M11.500 7V9M11.500 17V19M6 10L8 11M15 15L17 16M17 10L15 11M8 15L6 16" stroke={ORANGE} strokeWidth="2.400" />
                  </svg>
                  <Caret $color="#888" />
                </IconButton>
              </TabTools>
            </PageTabs>
            <BillGrid />
            <ScrollRow>
              <IconButton aria-label="向左滚动">
                <svg width="6" height="10" viewBox="0 0 6 10"><path d="M6 0V10L0 5Z" fill="#6b6b75" /></svg>
              </IconButton>
              <ScrollTrack><ScrollThumb /></ScrollTrack>
              <IconButton aria-label="向右滚动">
                <svg width="6" height="10" viewBox="0 0 6 10"><path d="M0 0V10L6 5Z" fill="#6b6b75" /></svg>
              </IconButton>
            </ScrollRow>
          </Upper>
          <Lower>
            <DetailTabs>
              {['工料机显示', '单价构成', '标准换算', '换算信息', '安装费用', '特征及内容', '组价方案', '工程量明细', '反查图形工程量', '说明信息'].map((name) => (
                <DetailTab key={name} $active={name === '工料机显示'}>{name}</DetailTab>
              ))}
            </DetailTabs>
            <Canvas>
              <Grid $width={detailWidth}>
                <Cols list={detailColumns} />
                <thead>
                  <tr>
                    {detailColumns.map(([name]) => (
                      <th key={name}>{name}</th>
                    ))}
                  </tr>
                </thead>
              </Grid>
            </Canvas>
          </Lower>
        </Main>
      </Workspace>
      <StatusBar />
      <SystemBar />
      <Overlay>
        <Dialog role="dialog" aria-label="提示">
          <DialogHead>
            <span>提示</span>
            <IconButton aria-label="关闭提示">
              <svg width="12" height="12" viewBox="0 0 12 12"><path d="M1 1L11 11M11 1L1 11" stroke="#fff" strokeWidth="2.800" /></svg>
            </IconButton>
          </DialogHead>
          <DialogBody>
            <svg width="71" height="71" viewBox="0 0 70 70" aria-hidden="true">
              <circle cx="35" cy="35" r="35" fill="#4f97f8" />
              <circle cx="35" cy="18.500" r="4.500" fill="#fff" />
              <path d="M35 32V53" stroke="#fff" strokeWidth="9" strokeLinecap="round" />
            </svg>
            <p>算量工程清单计算规则或定额计算规则不符合要求，暂不支持导入，敬请谅解</p>
          </DialogBody>
          <DialogFoot>
            <Confirm>确定</Confirm>
          </DialogFoot>
        </Dialog>
      </Overlay>
    </Shell>
  );
}
